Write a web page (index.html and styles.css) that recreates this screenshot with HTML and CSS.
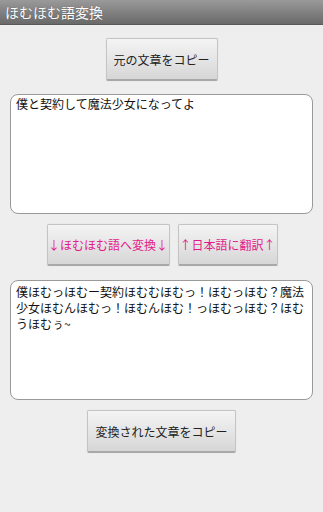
FILE: index.html
```html
<!DOCTYPE html>
<html lang="ja">
<head>
    <meta charset="UTF-8">
    <meta name="viewport" content="width=device-width, initial-scale=1.0">
    <title>ほむほむ語変換</title>
    <link rel="stylesheet" href="styles.css">
</head>
<body>
    <div class="title-bar">ほむほむ語変換</div>

    <div class="content">
        <button class="btn btn-copy-src">元の文章をコピー</button>

        <div class="text-box">僕と契約して魔法少女になってよ</div>

        <div class="button-row">
            <button class="btn btn-pink btn-to-homu">↓ほむほむ語へ変換↓</button>
            <button class="btn btn-pink btn-to-ja">↑日本語に翻訳↑</button>
        </div>

        <div class="text-box">僕ほむっほむー契約ほむむほむっ！ほむっほむ？魔法少女ほむんほむっ！ほむんほむ！っほむっほむ？ほむうほむぅ~</div>

        <button class="btn btn-copy-out">変換された文章をコピー</button>
    </div>
</body>
</html>
```

FILE: styles.css
```css
body {
    margin: 0;
    background: #eeeeee;
    font-family: "Noto Sans CJK JP", "Noto Sans", sans-serif;
    color: #222;
    width: 323px;
    height: 512px;
    overflow: hidden;
}

.title-bar {
    height: 25px;
    line-height: 24px;
    padding-left: 5px;
    font-size: 14px;
    color: #fff;
    text-shadow: 0 0 1px rgba(0, 0, 0, 0.4);
    background: linear-gradient(to bottom, #9a9a9a 0%, #7c7c7c 60%, #6a6a6a 100%);
    border-bottom: 1px solid #5a5a5a;
    box-sizing: border-box;
}

.content {
    display: flex;
    flex-direction: column;
    align-items: center;
}

.btn {
    height: 43px;
    padding: 0;
    font-family: inherit;
    font-size: 12px;
    color: #222;
    background: linear-gradient(to bottom, #f4f4f4 0%, #e4e4e4 55%, #d6d6d6 100%);
    border: 1px solid #c4c4c4;
    border-bottom: 2px solid #a8a8a8;
    border-radius: 2px;
    box-shadow: 0 0 1px rgba(0, 0, 0, 0.15);
}

.btn-copy-src {
    width: 112px;
    margin-top: 13px;
}

.btn-pink {
    color: #e3198b;
    width: 123px;
    height: 42px;
}

.btn-to-ja {
    width: 100px;
}

.button-row {
    display: flex;
    gap: 8px;
    margin-top: 10px;
    margin-left: 1px;
}

.text-box {
    width: 303px;
    height: 120px;
    box-sizing: border-box;
    margin-top: 13px;
    padding: 1px 5px;
    background: #fff;
    border: 1px solid #9a9a9a;
    border-radius: 8px;
    font-size: 12px;
    line-height: 16px;
    color: #111;
    word-break: break-all;
}

.button-row + .text-box {
    margin-top: 14px;
    padding-top: 3px;
}

.btn-copy-out {
    width: 149px;
    margin-top: 10px;
}
```
